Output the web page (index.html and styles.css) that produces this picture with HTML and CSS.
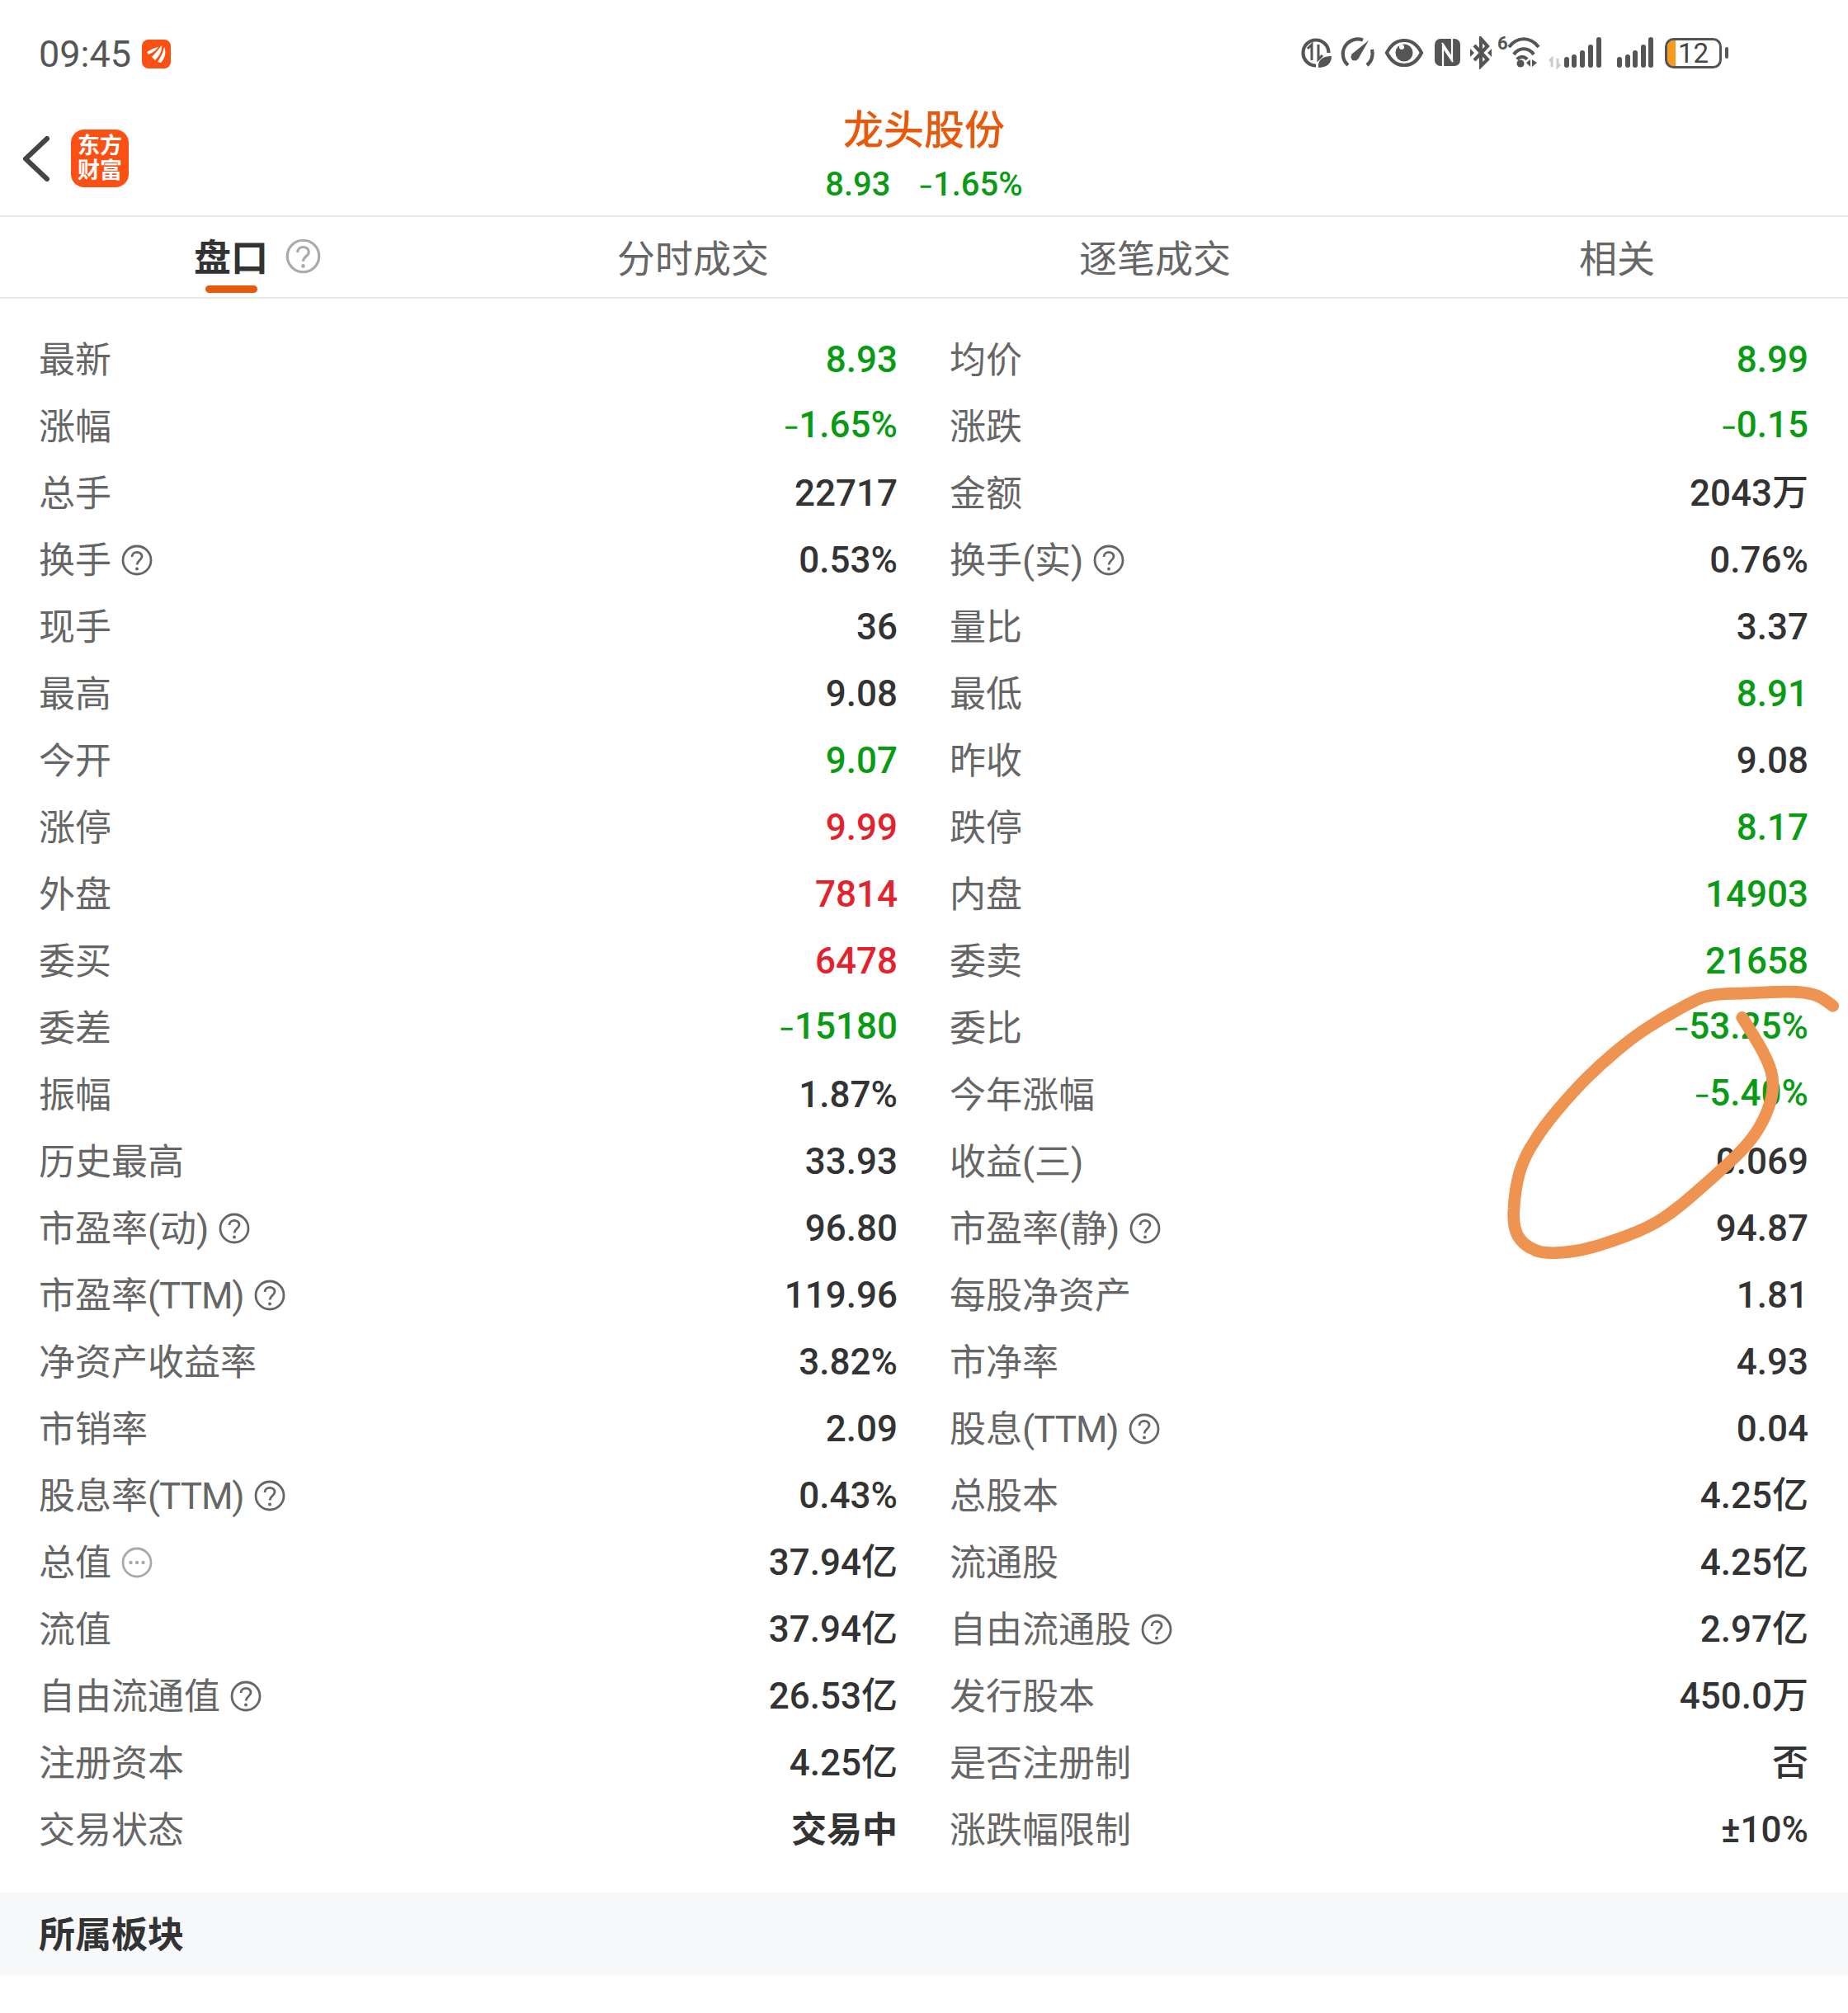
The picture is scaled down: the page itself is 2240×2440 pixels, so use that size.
FILE: index.html
```html
<!DOCTYPE html>
<html lang="zh-CN">
<head>
  <meta charset="UTF-8">
  <title>龙头股份 盘口</title>
  <link rel="stylesheet" href="styles.css">
</head>
<body>

  <svg class="defs" width="0" height="0">
    <symbol id="help" viewBox="0 0 38 38">
      <circle cx="19" cy="19" r="17" fill="none" stroke="currentColor" stroke-width="2.8"/>
      <path d="M13 15C13 7.5 25 7.5 25 14.5C25 19 19 19.5 19 24.5" fill="none" stroke="currentColor" stroke-width="2.8"/>
      <circle cx="19" cy="29.5" r="2" fill="currentColor"/>
    </symbol>
    <symbol id="more" viewBox="0 0 38 38">
      <circle cx="19" cy="19" r="17" fill="none" stroke="currentColor" stroke-width="2.8"/>
      <circle cx="11.5" cy="19" r="2.2" fill="currentColor"/>
      <circle cx="19" cy="19" r="2.2" fill="currentColor"/>
      <circle cx="26.5" cy="19" r="2.2" fill="currentColor"/>
    </symbol>
  </svg>

  <div class="status-bar">
    <div class="status-left">
      <span class="time">09:45</span>
      <svg class="app-dot" width="35" height="35" viewBox="0 0 35 35">
        <rect width="35" height="35" rx="8" fill="#fa5014"/>
        <path d="M6 15C11 12 15 10 20 9C17 13 13 16 8 18Z" fill="#fff"/>
        <path d="M12 21C16 17 19 13 24 7C25 13 21 20 16 25Z" fill="#fff"/>
        <path d="M19 27C23 21 26 15 27 9C30 15 28 23 23 28Z" fill="#fff"/>
      </svg>
    </div>
    <div class="status-icons">
      <svg width="44" height="40" viewBox="1578 45 44 40">
        <path class="line" d="M1598 80.5A15.5 15.5 0 1 1 1613.5 65"/>
        <path class="thin" d="M1593 74V55L1588 60M1601 55V73L1606 68"/>
        <path class="solid" d="M1601 83C1600 73 1607 69 1617 69C1617 78 1611 83 1601 83Z"/>
      </svg>
      <svg width="53" height="40" viewBox="1622 45 53 40">
        <path class="line" d="M1637 80A18 18 0 0 1 1655 49.5M1666 61A18 18 0 0 1 1660 80"/>
        <path class="solid" d="M1641 67L1662 50L1649 73Z"/>
        <circle class="solid" cx="1645" cy="70" r="4.5"/>
      </svg>
      <svg width="60" height="40" viewBox="1675 45 60 40">
        <path class="line" d="M1684 65C1694 45 1716 45 1726 65C1716 85 1694 85 1684 65Z"/>
        <circle class="solid" cx="1705" cy="65" r="10.5"/>
        <circle cx="1702" cy="58" r="3" fill="#fff"/>
      </svg>
      <svg width="44" height="40" viewBox="1735 45 44 40">
        <rect class="solid" x="1742" y="48" width="31" height="33" rx="7"/>
        <path class="cut" d="M1752 82V58L1764 76M1763 47V71L1751 53"/>
      </svg>
      <svg width="36" height="40" viewBox="1779 45 36 40">
        <path class="line" d="M1790 56L1806 73L1798 81V48L1806 57L1790 74"/>
        <path class="solid" d="M1785 60L1790 65L1785 70ZM1811 60L1806 65L1811 70Z"/>
      </svg>
      <div class="icon-wrap">
        <svg width="57" height="40" viewBox="1815 45 57 40">
          <path class="line" d="M1832 58C1842 45 1858 45 1868 58M1838 67C1844 58 1856 58 1862 67M1842 73C1845 69 1851 69 1854 73"/>
          <circle class="solid" cx="1846" cy="78" r="4.5"/>
          <path class="solid" d="M1853 77L1858 73V82ZM1860 73V82L1866 77Z"/>
        </svg>
        <span class="wifi-num">6</span>
      </div>
      <svg width="78" height="40" viewBox="1872 45 78 40">
        <path class="thin faint" d="M1884 82V72L1881 75M1891 72V82L1894 79"/>
        <path class="bars" d="M1902 73V80M1911 70V80M1921 65V80M1931 58V80M1941 49V80"/>
      </svg>
      <svg width="64" height="40" viewBox="1950 45 64 40">
        <path class="bars" d="M1966 73V80M1976 70V80M1985 65V80M1995 58V80M2004 49V80"/>
      </svg>
      <div class="icon-wrap">
        <svg width="90" height="40" viewBox="2014 45 90 40">
          <path d="M2034 50H2031A7 7 0 0 0 2024 57V74A7 7 0 0 0 2031 81H2034Z" fill="#f79a1e"/>
          <rect class="battery" x="2022.5" y="48.5" width="66" height="34" rx="9"/>
          <rect class="solid" x="2094" y="58" width="4" height="14" rx="2"/>
        </svg>
        <span class="battery-num">12</span>
      </div>
    </div>
  </div>

  <div class="nav-bar">
    <div class="nav-left">
      <svg class="back" width="32" height="55" viewBox="0 0 32 55">
        <path d="M29 3L3 27.5L29 52"/>
      </svg>
      <div class="logo"><span>东方</span><span>财富</span></div>
    </div>
    <div class="title-block">
      <div class="title">龙头股份</div>
      <div class="subtitle"><span>8.93</span><span><span class="neg">−</span>1.65%</span></div>
    </div>
  </div>

  <div class="tabs">
    <div class="tab active">
      <span class="tab-label">盘口<svg class="tab-help"><use href="#help"/></svg></span>
    </div>
    <div class="tab">分时成交</div>
    <div class="tab">逐笔成交</div>
    <div class="tab">相关</div>
  </div>

  <div class="quote-grid">
    <div class="cell"><span class="label">最新</span><span class="value down">8.93</span></div>
    <div class="cell"><span class="label">均价</span><span class="value down">8.99</span></div>
    <div class="cell"><span class="label">涨幅</span><span class="value down"><span class="neg">−</span>1.65%</span></div>
    <div class="cell"><span class="label">涨跌</span><span class="value down"><span class="neg">−</span>0.15</span></div>
    <div class="cell"><span class="label">总手</span><span class="value">22717</span></div>
    <div class="cell"><span class="label">金额</span><span class="value">2043万</span></div>
    <div class="cell"><span class="label">换手<svg class="help"><use href="#help"/></svg></span><span class="value">0.53%</span></div>
    <div class="cell"><span class="label">换手(实)<svg class="help"><use href="#help"/></svg></span><span class="value">0.76%</span></div>
    <div class="cell"><span class="label">现手</span><span class="value">36</span></div>
    <div class="cell"><span class="label">量比</span><span class="value">3.37</span></div>
    <div class="cell"><span class="label">最高</span><span class="value">9.08</span></div>
    <div class="cell"><span class="label">最低</span><span class="value down">8.91</span></div>
    <div class="cell"><span class="label">今开</span><span class="value down">9.07</span></div>
    <div class="cell"><span class="label">昨收</span><span class="value">9.08</span></div>
    <div class="cell"><span class="label">涨停</span><span class="value up">9.99</span></div>
    <div class="cell"><span class="label">跌停</span><span class="value down">8.17</span></div>
    <div class="cell"><span class="label">外盘</span><span class="value up">7814</span></div>
    <div class="cell"><span class="label">内盘</span><span class="value down">14903</span></div>
    <div class="cell"><span class="label">委买</span><span class="value up">6478</span></div>
    <div class="cell"><span class="label">委卖</span><span class="value down">21658</span></div>
    <div class="cell"><span class="label">委差</span><span class="value down"><span class="neg">−</span>15180</span></div>
    <div class="cell"><span class="label">委比</span><span class="value down"><span class="neg">−</span>53.25%</span></div>
    <div class="cell"><span class="label">振幅</span><span class="value">1.87%</span></div>
    <div class="cell"><span class="label">今年涨幅</span><span class="value down"><span class="neg">−</span>5.40%</span></div>
    <div class="cell"><span class="label">历史最高</span><span class="value">33.93</span></div>
    <div class="cell"><span class="label">收益(三)</span><span class="value">0.069</span></div>
    <div class="cell"><span class="label">市盈率(动)<svg class="help"><use href="#help"/></svg></span><span class="value">96.80</span></div>
    <div class="cell"><span class="label">市盈率(静)<svg class="help"><use href="#help"/></svg></span><span class="value">94.87</span></div>
    <div class="cell"><span class="label"><span>市盈率<span class="ttm">(TTM)</span></span><svg class="help"><use href="#help"/></svg></span><span class="value">119.96</span></div>
    <div class="cell"><span class="label">每股净资产</span><span class="value">1.81</span></div>
    <div class="cell"><span class="label">净资产收益率</span><span class="value">3.82%</span></div>
    <div class="cell"><span class="label">市净率</span><span class="value">4.93</span></div>
    <div class="cell"><span class="label">市销率</span><span class="value">2.09</span></div>
    <div class="cell"><span class="label"><span>股息<span class="ttm">(TTM)</span></span><svg class="help"><use href="#help"/></svg></span><span class="value">0.04</span></div>
    <div class="cell"><span class="label"><span>股息率<span class="ttm">(TTM)</span></span><svg class="help"><use href="#help"/></svg></span><span class="value">0.43%</span></div>
    <div class="cell"><span class="label">总股本</span><span class="value">4.25亿</span></div>
    <div class="cell"><span class="label">总值<svg class="help soft"><use href="#more"/></svg></span><span class="value">37.94亿</span></div>
    <div class="cell"><span class="label">流通股</span><span class="value">4.25亿</span></div>
    <div class="cell"><span class="label">流值</span><span class="value">37.94亿</span></div>
    <div class="cell"><span class="label">自由流通股<svg class="help"><use href="#help"/></svg></span><span class="value">2.97亿</span></div>
    <div class="cell"><span class="label">自由流通值<svg class="help"><use href="#help"/></svg></span><span class="value">26.53亿</span></div>
    <div class="cell"><span class="label">发行股本</span><span class="value">450.0万</span></div>
    <div class="cell"><span class="label">注册资本</span><span class="value">4.25亿</span></div>
    <div class="cell"><span class="label">是否注册制</span><span class="value">否</span></div>
    <div class="cell"><span class="label">交易状态</span><span class="value strong">交易中</span></div>
    <div class="cell"><span class="label">涨跌幅限制</span><span class="value">±10%</span></div>
  </div>

  <div class="section-head">所属板块</div>

  <svg class="scribble" width="460" height="400" viewBox="0 0 1380 1200">
    <path d="M1325 208Q1290 180 1265 170Q1240 160 1195 157Q1150 155 1095 158Q1040 162 958 163Q875 165 838 182Q800 200 750 228Q700 255 650 288Q600 320 540 370Q480 420 430 470Q380 520 325 585Q270 650 240 700Q205 750 185 815Q168 880 165 945Q160 1010 180 1045Q200 1078 235 1092Q260 1108 320 1106Q385 1103 440 1088Q500 1072 580 1042Q660 1012 710 978Q760 945 820 892Q880 840 940 785Q1000 730 1030 690Q1060 650 1080 605Q1100 560 1105 520Q1110 480 1100 445Q1090 410 1065 365Q1040 320 995 250"/>
  </svg>

</body>
</html>
```

FILE: styles.css
```css
* { box-sizing: border-box; }
body { margin: 0; position: relative; background: #fff; color: #333; font-family: Roboto, "Noto Sans CJK SC", sans-serif; font-size: 44px; }
.defs { position: absolute; }

.status-bar { height: 127px; display: flex; justify-content: space-between; align-items: center; padding: 3px 139px 0 47px; }
.status-left { display: flex; align-items: center; gap: 13px; }
.time { font-size: 45px; color: #555; line-height: 1; }
.status-icons { display: flex; margin-top: -3px; }
.status-icons svg { display: block; }
.icon-wrap { position: relative; }
.line { fill: none; stroke: #555; stroke-width: 4.2; }
.thin { fill: none; stroke: #555; stroke-width: 3; }
.faint { stroke: #ccc; }
.solid { fill: #555; }
.cut { fill: none; stroke: #fff; stroke-width: 2.2; }
.bars { fill: none; stroke: #555; stroke-width: 6; stroke-linecap: round; }
.battery { fill: none; stroke: #555; stroke-width: 3; }
.battery-num { position: absolute; left: 23px; top: 4px; font-size: 33px; line-height: 1; color: #444; }
.wifi-num { position: absolute; left: 3px; top: -2px; font-size: 22px; font-weight: 700; line-height: 1; color: #555; }

.nav-bar { height: 136px; display: grid; grid-template-columns: 1fr auto 1fr; align-items: center; padding-bottom: 9px; border-bottom: 2px solid #e8e8e8; }
.nav-left { display: flex; align-items: center; gap: 26px; padding-left: 28px; }
.back { fill: none; stroke: #444; stroke-width: 6; stroke-linecap: round; }
.logo { width: 70px; height: 70px; border-radius: 16px; background: #fa5014; color: #fff; font-size: 27px; font-weight: 700; line-height: 30px; display: flex; flex-direction: column; align-items: center; justify-content: center; }
.title-block { text-align: center; padding-top: 2px; }
.title { font-size: 49px; font-weight: 500; line-height: 60px; color: #e8590c; }
.subtitle { display: flex; justify-content: center; align-items: baseline; gap: 34px; margin-top: 5px; font-size: 40px; font-weight: 500; line-height: 60px; color: #0a9b14; }
.subtitle .neg { font-size: 31px; }

.tabs { height: 99px; display: flex; border-bottom: 2px solid #e8e8e8; padding-bottom: 4px; }
.tab { flex: 1; display: flex; align-items: center; justify-content: center; position: relative; font-size: 46px; color: #666; }
.tab.active { font-size: 45px; font-weight: 700; color: #333; }
.tab.active::after { content: ""; position: absolute; left: 249px; bottom: 1px; width: 63px; height: 9px; border-radius: 5px; background: #e8590c; }
.tab-label { position: relative; }
.tab-help { position: absolute; left: calc(100% + 21px); top: 50%; width: 43px; height: 43px; margin-top: -21px; color: #aaa; }

.quote-grid { display: grid; grid-template-columns: 1041px 1041px; column-gap: 63px; padding: 33px 48px 36px 47px; }
.cell { height: 81px; display: flex; justify-content: space-between; align-items: center; }
.label { display: flex; align-items: center; color: #666; padding-bottom: 5px; }
.ttm { letter-spacing: -1px; }
.help { width: 38px; height: 38px; margin: 5px 0 0 12px; color: #666; }
.help.soft { color: #aaa; }
.value { color: #333; font-weight: 500; line-height: 60px; }
.value.up { color: #e2232e; }
.value.down { color: #0a9b14; }
.value.strong { font-weight: 700; font-size: 43px; }
.neg { font-size: 34px; }

.section-head { height: 101px; display: flex; align-items: center; padding: 0 0 6px 47px; background: #f7f8fa; font-weight: 700; color: #333; }

.scribble { position: absolute; left: 1780px; top: 1150px; fill: none; stroke: #ee9350; stroke-width: 44; stroke-linecap: round; stroke-linejoin: round; }
```
